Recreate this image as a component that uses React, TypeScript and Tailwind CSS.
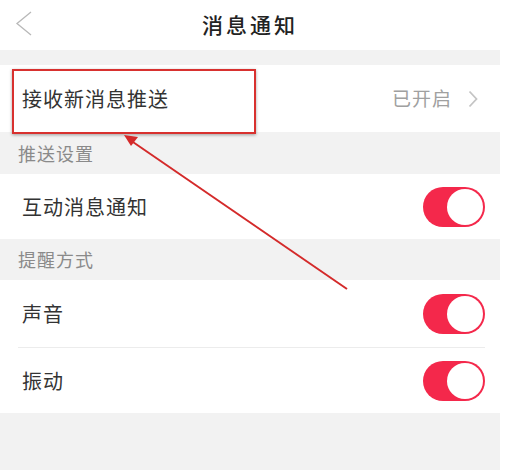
const font = { fontFamily: '"Noto Sans CJK SC", "Noto Sans", sans-serif' };

const Toggle = () => (
  <div className="flex h-[40px] w-[62px] items-center justify-end rounded-full bg-[#f4284b] pr-[2px]">
    <div className="h-[36px] w-[36px] rounded-full bg-white" />
  </div>
);

const SectionTitle = ({ title, h }: { title: string; h: string }) => (
  <div className={`flex items-center bg-[#f2f2f2] pl-[18px] text-[18px] tracking-[1px] text-[#8a8a8a] ${h}`}>
    {title}
  </div>
);

const App = () => {
  return (
    <div className="relative h-[470px] w-[506px] overflow-hidden bg-white" style={font}>
      <div className="flex h-full w-[500px] flex-col">
        {/* Header */}
        <div className="relative flex h-[50px] items-center justify-center bg-white">
          <svg className="absolute left-[14px] top-[10px]" width="20" height="28" viewBox="0 0 20 28">
            <polyline points="17,2 3,13.5 17,25" fill="none" stroke="#b8b8b8" strokeWidth="1.3" />
          </svg>
          <h1 className="text-[21px] font-medium tracking-[3px] text-[#222]">消息通知</h1>
        </div>
        <div className="h-[15px] bg-[#f2f2f2]" />

        {/* 接收新消息推送 */}
        <div className="flex h-[67px] items-center justify-between pl-[22px] pr-[22px]">
          <span className="text-[20px] tracking-[1px] text-[#333]">接收新消息推送</span>
          <div className="flex items-center gap-[16px] text-[#a0a0a0]">
            <span className="text-[19px] tracking-[1px]">已开启</span>
            <svg width="10" height="18" viewBox="0 0 10 18">
              <polyline points="1.5,1.5 8.5,9 1.5,16.5" fill="none" stroke="#c4c4c4" strokeWidth="1.8" />
            </svg>
          </div>
        </div>

        <SectionTitle title="推送设置" h="h-[42px]" />
        <div className="flex h-[65px] items-center justify-between pl-[22px] pr-[15px]">
          <span className="text-[20px] tracking-[1px] text-[#333]">互动消息通知</span>
          <Toggle />
        </div>

        <SectionTitle title="提醒方式" h="h-[41px]" />
        <div className="flex h-[67px] items-center justify-between pl-[22px] pr-[15px]">
          <span className="text-[20px] tracking-[1px] text-[#333]">声音</span>
          <Toggle />
        </div>
        <div className="ml-[18px] mr-[15px] h-px bg-[#ececec]" />
        <div className="flex h-[65px] items-center justify-between pl-[22px] pr-[15px]">
          <span className="text-[20px] tracking-[1px] text-[#333]">振动</span>
          <Toggle />
        </div>
        <div className="flex-1 bg-[#f2f2f2]" />
      </div>

      {/* annotation box */}
      <div className="absolute left-[12px] top-[69px] h-[65px] w-[244px] border-2 border-[#d8312f] shadow-[0_1px_3px_rgba(0,0,0,0.35)]" />

      {/* annotation arrow */}
      <svg className="absolute left-0 top-0" width="506" height="470" viewBox="0 0 506 470">
        <line x1="347" y1="289" x2="130" y2="140" stroke="#d42a2a" strokeWidth="2" />
        <polygon points="124,135 138,137 131,146" fill="#d42a2a" />
      </svg>
    </div>
  );
};

export default App;
